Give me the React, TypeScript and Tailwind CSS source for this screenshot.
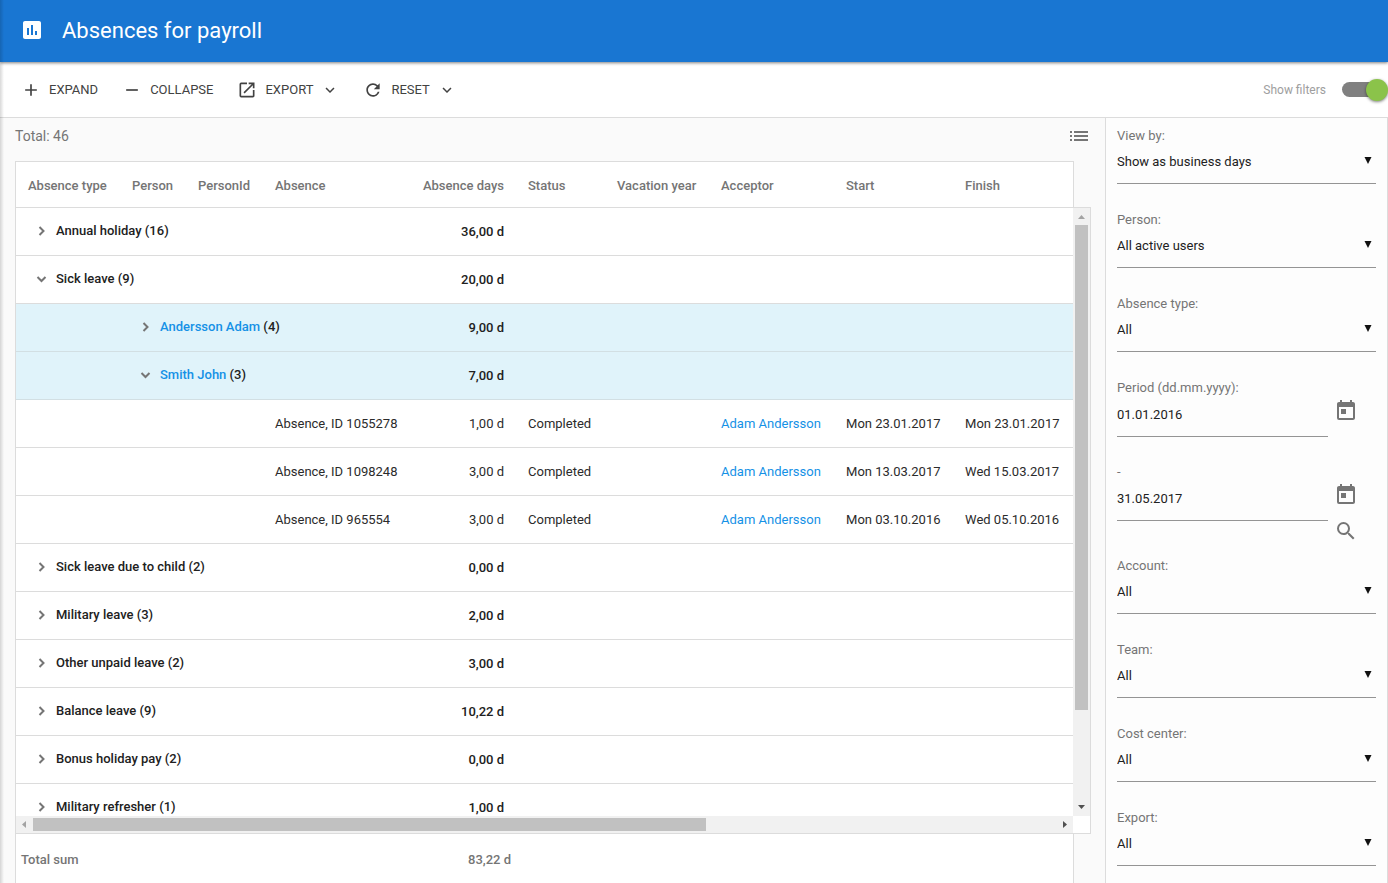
import React, { useState } from 'react';
import {
  MdAdd,
  MdAssessment,
  MdExpandMore,
  MdList,
  MdOpenInNew,
  MdRefresh,
  MdRemove,
  MdSearch,
  MdToday,
} from 'react-icons/md';

type Row =
  | { kind: 'type'; name: string; count: number; days: string; open?: boolean }
  | { kind: 'person'; name: string; count: number; days: string; open?: boolean }
  | { kind: 'absence'; name: string; days: string; status: string; acceptor: string; start: string; finish: string };

const rows: Row[] = [
  { kind: 'type', name: 'Annual holiday', count: 16, days: '36,00 d' },
  { kind: 'type', name: 'Sick leave', count: 9, days: '20,00 d', open: true },
  { kind: 'person', name: 'Andersson Adam', count: 4, days: '9,00 d' },
  { kind: 'person', name: 'Smith John', count: 3, days: '7,00 d', open: true },
  { kind: 'absence', name: 'Absence, ID 1055278', days: '1,00 d', status: 'Completed', acceptor: 'Adam Andersson', start: 'Mon 23.01.2017', finish: 'Mon 23.01.2017' },
  { kind: 'absence', name: 'Absence, ID 1098248', days: '3,00 d', status: 'Completed', acceptor: 'Adam Andersson', start: 'Mon 13.03.2017', finish: 'Wed 15.03.2017' },
  { kind: 'absence', name: 'Absence, ID 965554', days: '3,00 d', status: 'Completed', acceptor: 'Adam Andersson', start: 'Mon 03.10.2016', finish: 'Wed 05.10.2016' },
  { kind: 'type', name: 'Sick leave due to child', count: 2, days: '0,00 d' },
  { kind: 'type', name: 'Military leave', count: 3, days: '2,00 d' },
  { kind: 'type', name: 'Other unpaid leave', count: 2, days: '3,00 d' },
  { kind: 'type', name: 'Balance leave', count: 9, days: '10,22 d' },
  { kind: 'type', name: 'Bonus holiday pay', count: 2, days: '0,00 d' },
  { kind: 'type', name: 'Military refresher', count: 1, days: '1,00 d' },
];

const columns = [
  'Absence type',
  'Person',
  'PersonId',
  'Absence',
  'Absence days',
  'Status',
  'Vacation year',
  'Acceptor',
  'Start',
  'Finish',
];

// Header, body and footer are separate tables, so they share the column widths
function Columns() {
  return (
    <colgroup>
      <col className="w-[104px]" />
      <col className="w-[66px]" />
      <col className="w-[77px]" />
      <col className="w-[147px]" />
      <col className="w-[106px]" />
      <col className="w-[89px]" />
      <col className="w-[104px]" />
      <col className="w-[125px]" />
      <col className="w-[119px]" />
      <col className="w-[120px]" />
    </colgroup>
  );
}

function ToggleButton({ open, label }: { open?: boolean; label: string }) {
  return (
    <button type="button" aria-label={label} aria-expanded={!!open} className="text-[#757575]">
      <svg viewBox="0 0 18 18" className="size-[18px]" fill="none" stroke="currentColor" strokeWidth="2">
        <polyline points={open ? '5.5,7 9.5,11 13.5,7' : '7.5,5 11.5,9 7.5,13'} />
      </svg>
    </button>
  );
}

function TableRow({ row }: { row: Row }) {
  const cell = 'h-12 border-b border-[#dcdcdc] px-3';

  if (row.kind === 'type') {
    return (
      <tr className="font-medium">
        <td colSpan={4} className="h-12 border-b border-[#dcdcdc] pb-0.5 pl-4">
          <div className="flex items-center gap-1.5">
            <ToggleButton open={row.open} label={row.name} />
            <span>{row.name} ({row.count})</span>
          </div>
        </td>
        <td className={`${cell} text-right`}>{row.days}</td>
        <td colSpan={5} className={cell}></td>
      </tr>
    );
  }

  if (row.kind === 'person') {
    return (
      <tr className="bg-[#e0f3fa] font-medium">
        <td className="h-12 border-b border-[#d2dfe3]"></td>
        <td colSpan={3} className="h-12 border-b border-[#d2dfe3] pb-0.5 pl-4">
          <div className="flex items-center gap-1.5">
            <ToggleButton open={row.open} label={row.name} />
            <span>
              <a href="#" className="text-[#1591e6]">{row.name}</a> ({row.count})
            </span>
          </div>
        </td>
        <td className="h-12 border-b border-[#d2dfe3] px-3 text-right">{row.days}</td>
        <td colSpan={5} className="h-12 border-b border-[#d2dfe3]"></td>
      </tr>
    );
  }

  return (
    <tr className="text-[#2b2b2b]">
      <td className={cell}></td>
      <td className={cell}></td>
      <td className={cell}></td>
      <td className={cell}>{row.name}</td>
      <td className={`${cell} text-right`}>{row.days}</td>
      <td className={cell}>{row.status}</td>
      <td className={cell}></td>
      <td className={cell}>
        <a href="#" className="text-[#1591e6]">{row.acceptor}</a>
      </td>
      <td className={cell}>{row.start}</td>
      <td className={cell}>{row.finish}</td>
    </tr>
  );
}

function Arrow({ points, className }: { points: string; className: string }) {
  return (
    <svg viewBox="0 0 17 17" className={`size-[17px] shrink-0 ${className}`}>
      <polygon points={points} fill="currentColor" />
    </svg>
  );
}

function SelectField({ id, label, value }: { id: string; label: string; value: string }) {
  return (
    <div className="mb-[26px]">
      <label htmlFor={id} className="block h-5 leading-5 text-[#757575]">{label}</label>
      <div className="relative border-b border-[#949494] pb-[5px]">
        <select id={id} defaultValue={value} className="block h-8 w-full appearance-none bg-transparent outline-none">
          <option>{value}</option>
        </select>
        <svg viewBox="0 0 8 8" className="pointer-events-none absolute top-[11px] right-1 size-2">
          <polygon points="0.5,0 7.5,0 4,7" fill="#111" />
        </svg>
      </div>
    </div>
  );
}

function DateField({ id, label, value }: { id: string; label: string; value: string }) {
  return (
    <div>
      <label htmlFor={id} className="block h-5 leading-5 text-[#757575]">{label}</label>
      <div className="flex items-start gap-1.5">
        <div className="flex-1 border-b border-[#949494] pb-1.5">
          <input id={id} type="text" defaultValue={value} className="block h-8 w-full bg-transparent outline-none" />
        </div>
        <button type="button" aria-label="Open calendar" className="mr-[18px] pt-px text-[#757575]">
          <MdToday size={24} />
        </button>
      </div>
    </div>
  );
}

export default function App() {
  const [showFilters, setShowFilters] = useState(true);

  return (
    <div className="relative flex h-screen flex-col overflow-hidden bg-[#fafafa] font-['Roboto',sans-serif] text-[13px] text-[#212121]">
      <header className="z-10 flex h-[62px] shrink-0 items-center gap-[18px] bg-[#1976d2] px-5 pb-0.5 text-white shadow-[0_1px_3px_rgba(0,0,0,0.5)]">
        <MdAssessment size={24} />
        <h1 className="text-[22px]">Absences for payroll</h1>
      </header>

      <div className="flex h-14 shrink-0 items-center gap-6 border-b border-[#dcdcdc] bg-white pl-[21px] text-[#424242]">
        <button type="button" className="flex items-center gap-2">
          <MdAdd size={20} />
          EXPAND
        </button>
        <button type="button" className="flex items-center gap-2">
          <MdRemove size={20} />
          COLLAPSE
        </button>
        <button type="button" className="flex items-center gap-2">
          <MdOpenInNew size={20} />
          EXPORT
          <MdExpandMore size={18} />
        </button>
        <button type="button" className="flex items-center gap-2">
          <MdRefresh size={20} />
          RESET
          <MdExpandMore size={18} />
        </button>
        <label className="ml-auto flex items-center gap-4 text-xs text-[#9e9e9e]">
          Show filters
          <input
            type="checkbox"
            checked={showFilters}
            onChange={(e) => setShowFilters(e.target.checked)}
            className="relative mr-2.5 h-[15px] w-9 appearance-none rounded-full bg-[#808080] before:absolute before:-top-[3px] before:-left-2.5 before:size-[22px] before:rounded-full before:bg-[#fafafa] before:shadow-[0_1px_3px_rgba(0,0,0,0.5)] checked:before:left-6 checked:before:bg-[#8bc34a]"
          />
        </label>
      </div>

      <div className="flex min-h-0 flex-1">
        <main className="flex min-w-0 flex-1 flex-col pr-3.5 pl-[15px]">
          <div className="flex h-[43px] shrink-0 items-center justify-between pb-2 text-sm text-[#757575]">
            <span>Total: 46</span>
            <button type="button" aria-label="Columns">
              <MdList size={24} />
            </button>
          </div>

          <div className="mr-[17px] border border-b-0 border-[#dcdcdc] bg-white">
            <table className="w-full table-fixed border-separate border-spacing-0">
              <Columns />
              <thead>
                <tr className="text-left text-[#757575]">
                  {columns.map((name) => (
                    <th
                      key={name}
                      className={`h-[45px] px-3 pt-0.5 font-medium whitespace-nowrap ${name === 'Absence days' ? 'text-right' : ''}`}
                    >
                      {name}
                    </th>
                  ))}
                </tr>
              </thead>
            </table>
          </div>

          <div className="flex min-h-0 flex-1 flex-col border border-[#dcdcdc] bg-white">
            <div className="flex min-h-0 flex-1">
              <div className="flex-1 overflow-auto [scrollbar-width:none]">
                <table className="w-full table-fixed border-separate border-spacing-0 whitespace-nowrap">
                  <Columns />
                  <tbody>
                    {rows.map((row) => (
                      <TableRow key={row.name} row={row} />
                    ))}
                  </tbody>
                </table>
              </div>
              <div className="flex w-[17px] shrink-0 flex-col bg-[#f1f1f1]">
                <Arrow points="5,11 12,11 8.5,7" className="text-[#a3a3a3]" />
                <div className="min-h-0 flex-1 px-0.5">
                  <div className="h-[84.5%] bg-[#c1c1c1]"></div>
                </div>
                <Arrow points="5,6 12,6 8.5,10" className="text-[#505050]" />
              </div>
            </div>
            <div className="mr-[17px] flex h-[17px] shrink-0 bg-[#f1f1f1]">
              <Arrow points="10,5 10,12 6,8.5" className="text-[#a3a3a3]" />
              <div className="flex-1 py-0.5">
                <div className="h-full w-[65.8%] bg-[#c1c1c1]"></div>
              </div>
              <Arrow points="7,5 7,12 11,8.5" className="text-[#505050]" />
            </div>
          </div>

          <div className="mr-[17px] shrink-0 border-x border-[#dcdcdc] bg-white">
            <table className="w-full table-fixed border-separate border-spacing-0">
              <Columns />
              <tbody>
                <tr className="font-medium text-[#757575]">
                  <td colSpan={4} className="h-[49px] px-[5px] pt-0.5">Total sum</td>
                  <td className="h-[49px] px-[5px] pt-0.5 text-right">83,22 d</td>
                  <td colSpan={5}></td>
                </tr>
              </tbody>
            </table>
          </div>
        </main>

        {showFilters && (
          <aside className="w-[283px] shrink-0 overflow-hidden border-x border-[#dcdcdc] bg-[#fdfdfd] px-[11px] pt-2">
            <SelectField id="view" label="View by:" value="Show as business days" />
            <SelectField id="person" label="Person:" value="All active users" />
            <SelectField id="absence-type" label="Absence type:" value="All" />
            <div className="mb-[15px]">
              <div className="mb-[25px]">
                <DateField id="from" label="Period (dd.mm.yyyy):" value="01.01.2016" />
              </div>
              <DateField id="to" label="-" value="31.05.2017" />
              <button type="button" aria-label="Search" className="mr-[18px] ml-auto flex h-5 items-center text-[#757575]">
                <MdSearch size={24} />
              </button>
            </div>
            <SelectField id="account" label="Account:" value="All" />
            <SelectField id="team" label="Team:" value="All" />
            <SelectField id="cost-center" label="Cost center:" value="All" />
            <SelectField id="export" label="Export:" value="All" />
          </aside>
        )}
      </div>

      {/* Shadow cast by the side menu */}
      <div className="pointer-events-none absolute inset-y-0 left-0 z-20 w-1 bg-linear-to-r from-black/15 to-transparent"></div>
    </div>
  );
}
